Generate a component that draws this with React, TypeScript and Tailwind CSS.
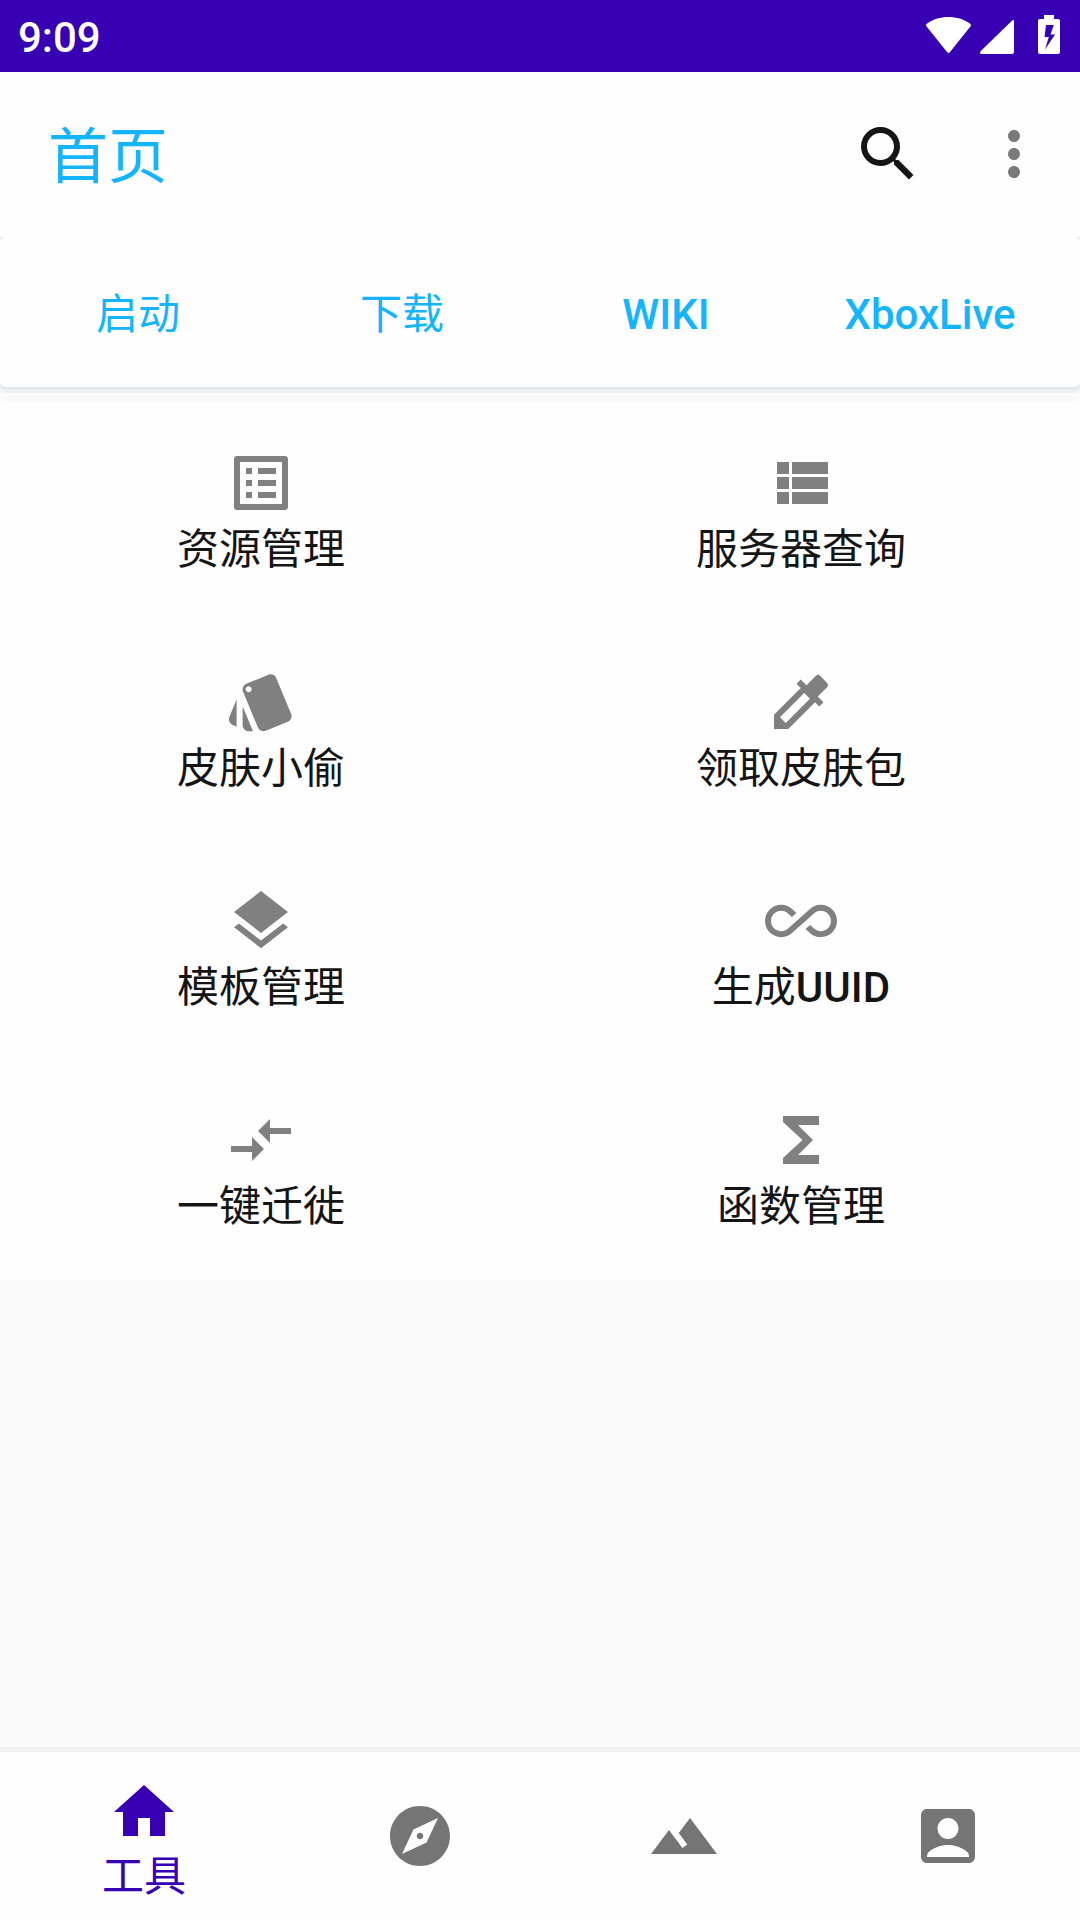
import type { ReactNode } from "react";
import {
  MdAccountBox,
  MdAllInclusive,
  MdColorize,
  MdCompareArrows,
  MdExplore,
  MdFunctions,
  MdHome,
  MdLayers,
  MdListAlt,
  MdMoreVert,
  MdSearch,
  MdStyle,
  MdTerrain,
} from "react-icons/md";

function ViewListIcon({ className }: { className?: string }) {
  return (
    <svg viewBox="0 0 24 24" className={className} fill="currentColor">
      <path d="M4 14h4v-4H4v4zm0 5h4v-4H4v4zM4 9h4V5H4v4zm5 5h12v-4H9v4zm0 5h12v-4H9v4zM9 5v4h12V5H9z" />
    </svg>
  );
}

function StatusBar() {
  return (
    <header className="flex h-[72px] items-center justify-between bg-[#3700b3] pl-[18px] pr-5 text-white">
      <span className="pt-1 text-[42px] leading-[48px] font-medium">9:09</span>
      <svg width="134" height="72" viewBox="0 0 134 72" fill="currentColor">
        <path d="M.6 26.5C-.3 25.400 0 24.200 1.200 23.400 7 19.200 14.500 17 22.500 17s15.500 2.200 21.300 6.400c1.200.8 1.500 2 .6 3.100L23.800 52.300c-.7.900-1.900.9-2.600 0z" />
        <path d="M86.200 20.400c1-.9 1.800-.5 1.800.7V52c0 1.200-.8 2-2 2H55c-1.200 0-1-2.200-.2-3z" />
        <path
          fillRule="evenodd"
          d="M118 15h10v4h4c1.300 0 2 .7 2 2v31c0 1.300-.7 2-2 2h-18c-1.300 0-2-.7-2-2V21c0-1.300.7-2 2-2h4zM120 25l-1.500 12h4.300L119 49.500 129 34.500h-4.500L127.800 25z"
        />
      </svg>
    </header>
  );
}

function Toolbar() {
  return (
    <div className="flex h-[165px] items-center pr-[30px] pb-px pl-12">
      <h1 className="flex-1 pt-[7px] text-[60px] leading-[72px] text-[#14b4ff]">首页</h1>
      <MdSearch className="mr-[54px] size-[72px] text-[#151515]" />
      <MdMoreVert className="size-[72px] text-[#7a7a7a]" />
    </div>
  );
}

const links: { label: string; latin?: boolean }[] = [
  { label: "启动" },
  { label: "下载" },
  { label: "WIKI", latin: true },
  { label: "XboxLive", latin: true },
];

function QuickLinks() {
  return (
    <div className="bg-[#e6ebef]">
      <nav className="grid h-[150px] grid-cols-4 items-center rounded-[5px] bg-[#fefefe] pt-[5px] pr-[18px] pl-[6px] shadow-[0_2px_0_#dfe5ea,0_6px_0_#eef0f3,0_15px_0_#fafafa]">
        {links.map((link) => (
          <a
            key={link.label}
            className={
              link.latin
                ? "text-center text-[42px] leading-[48px] font-medium text-[#14b4ff]"
                : "text-center text-[42px] leading-[48px] text-[#14b4ff]"
            }
          >
            {link.label}
          </a>
        ))}
      </nav>
    </div>
  );
}

const iconClass = "size-[72px] text-[#808080]";

const tools: { icon: ReactNode; label: ReactNode }[] = [
  { icon: <MdListAlt className={iconClass} />, label: "资源管理" },
  { icon: <ViewListIcon className={iconClass} />, label: "服务器查询" },
  { icon: <MdStyle className={iconClass} />, label: "皮肤小偷" },
  { icon: <MdColorize className={iconClass} />, label: "领取皮肤包" },
  { icon: <MdLayers className={iconClass} />, label: "模板管理" },
  {
    icon: <MdAllInclusive className={iconClass} />,
    label: (
      <>
        生成<span className="font-medium">UUID</span>
      </>
    ),
  },
  { icon: <MdCompareArrows className={iconClass} />, label: "一键迁徙" },
  { icon: <MdFunctions className={iconClass} />, label: "函数管理" },
];

function ToolGrid() {
  return (
    <section className="mt-[15px] grid grid-cols-2 bg-[#fefefe] pb-0.5">
      {tools.map((tool, i) => (
        <div key={i} className="flex h-[219px] flex-col items-center pt-[45px] pr-[18px]">
          {tool.icon}
          <span className="mt-[7px] text-[42px] leading-[48px] text-[#151515]">{tool.label}</span>
        </div>
      ))}
    </section>
  );
}

function BottomNav() {
  return (
    <nav className="flex h-[168px] bg-[#fefefe] text-[#757575] shadow-[0_-5px_0_#f1f2f4]">
      <div className="flex w-[288px] flex-col items-center pt-6 text-[#3700b3]">
        <MdHome className="size-[72px]" />
        <span className="mt-[5px] text-[42px] leading-[48px]">工具</span>
      </div>
      {[MdExplore, MdTerrain, MdAccountBox].map((Icon, i) => (
        <div key={i} className="flex flex-1 items-center justify-center">
          <Icon className="size-[72px]" />
        </div>
      ))}
    </nav>
  );
}

export default function App() {
  return (
    <div className="flex h-[1920px] w-[1080px] flex-col overflow-hidden bg-[#fefefe] font-['Roboto','Noto_Sans_CJK_SC',sans-serif]">
      <StatusBar />
      <Toolbar />
      <QuickLinks />
      <ToolGrid />
      <div className="flex-1 bg-[#fafafa]" />
      <BottomNav />
    </div>
  );
}
